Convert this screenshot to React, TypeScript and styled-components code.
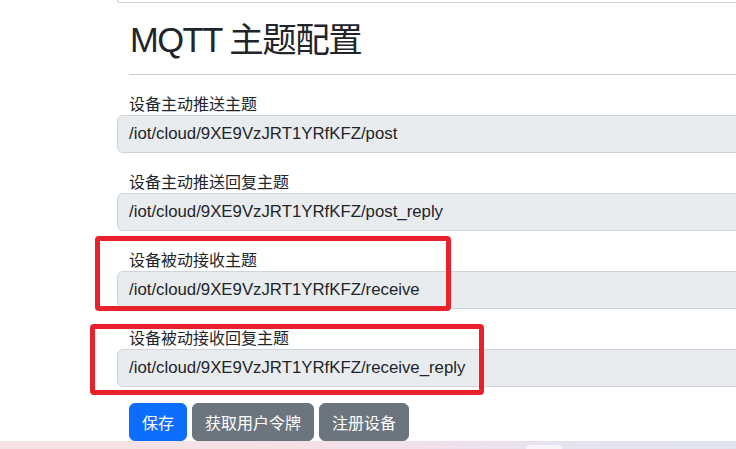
import React from "react";
import styled, { createGlobalStyle } from "styled-components";

const GlobalStyle = createGlobalStyle`
  html, body {
    margin: 0;
    padding: 0;
    background: #ffffff;
    overflow: hidden;
  }
  * { box-sizing: border-box; }
`;

const Page = styled.div`
  position: relative;
  width: 736px;
  height: 449px;
  overflow: hidden;
  display: flex;
  flex-direction: column;
  background: #ffffff;
  color: #212529;
  font-family: "Liberation Sans", "Noto Sans CJK SC", sans-serif;
`;

const Content = styled.div`
  flex: 1;
  display: flex;
  flex-direction: column;
  padding-left: 129px;
`;

const PrevFieldEdge = styled.div`
  height: 3px;
  margin-left: -12px;
  margin-right: -20px;
  border: 1px solid #ced4da;
  border-top: none;
  border-radius: 0 0 6px 6px;
  background: #ffffff;
`;

const Title = styled.h2`
  margin: 16px 0 0 1px;
  height: 42px;
  font-size: 34.5px;
  line-height: 42px;
  font-weight: 400;
  letter-spacing: -1.5px;
  color: #212529;
  white-space: nowrap;
`;

const Divider = styled.hr`
  margin: 13px 0 16px;
  border: 0;
  border-top: 1px solid #cbcccd;
  height: 0;
`;

const Field = styled.div`
  display: flex;
  flex-direction: column;
  margin-bottom: 16px;
`;

const Label = styled.label`
  height: 24px;
  font-family: "Noto Sans CJK SC", "Liberation Sans", sans-serif;
  font-size: 16px;
  line-height: 24px;
  color: #212529;
  white-space: nowrap;
`;

const TopicInput = styled.div`
  height: 38px;
  margin-left: -12px;
  margin-right: -20px;
  padding: 0 11px;
  border: 1px solid #ced4da;
  border-radius: 6px;
  background: #e9ecef;
  font-family: "Liberation Sans", "Noto Sans CJK SC", sans-serif;
  font-size: 16.8px;
  line-height: 36px;
  color: #212529;
  white-space: nowrap;
`;

const ButtonRow = styled.div`
  display: flex;
  gap: 5px;
`;

const Button = styled.button<{ $variant: "primary" | "secondary" }>`
  height: 38px;
  padding: 0 12px;
  border: 1px solid ${(p) => (p.$variant === "primary" ? "#0d6efd" : "#6c757d")};
  background: ${(p) => (p.$variant === "primary" ? "#0d6efd" : "#6c757d")};
  color: #ffffff;
  border-radius: 6px;
  font-family: "Noto Sans CJK SC", "Liberation Sans", sans-serif;
  font-size: 16px;
  line-height: 36px;
  white-space: nowrap;
  cursor: pointer;
`;

const BottomStrip = styled.div`
  position: relative;
  height: 8px;
  flex-shrink: 0;
  background: linear-gradient(
    90deg,
    #f6e2e5 0%,
    #f4e1e6 40%,
    #eee0ec 62%,
    #e4e3f0 80%,
    #e1e4ef 100%
  );
`;

const StripTab = styled.div`
  position: absolute;
  left: 526px;
  bottom: 0;
  width: 36px;
  height: 4px;
  border-radius: 4px 4px 0 0;
  background: #f8f6fa;
`;

const Highlight = styled.div`
  position: absolute;
  border: 5px solid #e8222b;
  border-radius: 4px;
  pointer-events: none;
`;

const fields = [
  { label: "设备主动推送主题", value: "/iot/cloud/9XE9VzJRT1YRfKFZ/post" },
  { label: "设备主动推送回复主题", value: "/iot/cloud/9XE9VzJRT1YRfKFZ/post_reply" },
  { label: "设备被动接收主题", value: "/iot/cloud/9XE9VzJRT1YRfKFZ/receive" },
  { label: "设备被动接收回复主题", value: "/iot/cloud/9XE9VzJRT1YRfKFZ/receive_reply" },
];

const highlights = [
  { left: 95, top: 236, width: 356, height: 75 },
  { left: 90, top: 324, width: 394, height: 71 },
];

export default function App() {
  return (
    <>
      <GlobalStyle />
      <Page>
        <Content>
          <PrevFieldEdge />
          <Title>MQTT 主题配置</Title>
          <Divider />
          {fields.map((f) => (
            <Field key={f.label}>
              <Label>{f.label}</Label>
              <TopicInput>{f.value}</TopicInput>
            </Field>
          ))}
          <ButtonRow>
            <Button $variant="primary">保存</Button>
            <Button $variant="secondary">获取用户令牌</Button>
            <Button $variant="secondary">注册设备</Button>
          </ButtonRow>
        </Content>
        <BottomStrip>
          <StripTab />
        </BottomStrip>
        {highlights.map((h, i) => (
          <Highlight
            key={i}
            style={{ left: h.left, top: h.top, width: h.width, height: h.height }}
          />
        ))}
      </Page>
    </>
  );
}
